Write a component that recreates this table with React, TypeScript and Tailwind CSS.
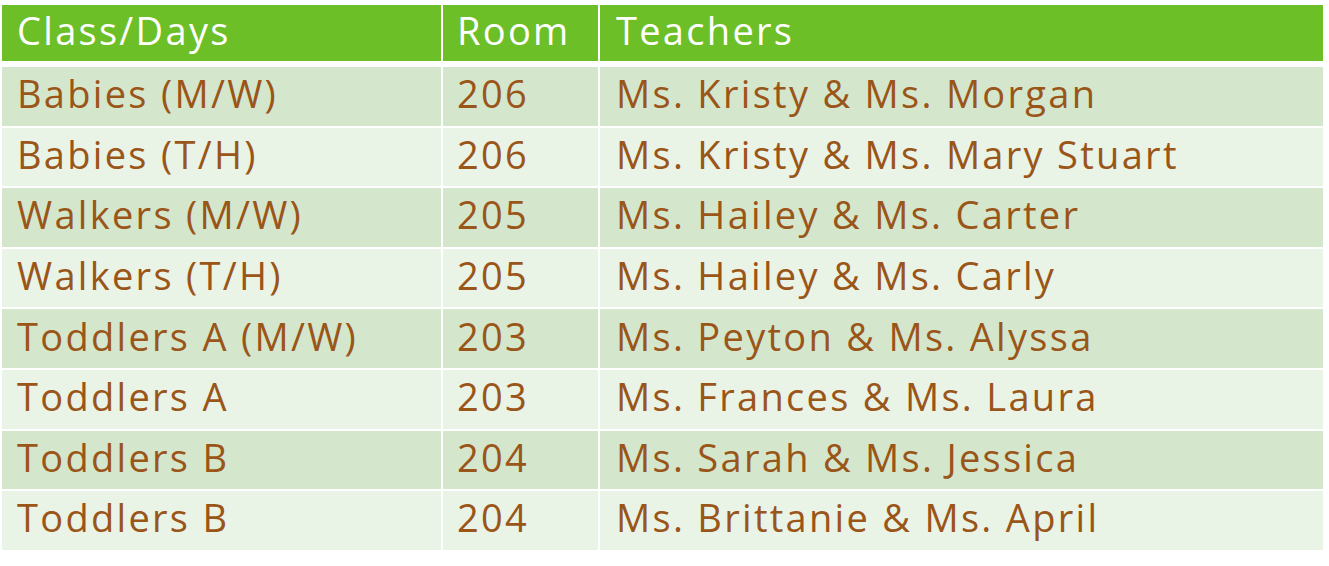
import React from 'react';

const rows = [
  ['Babies (M/W)', '206', 'Ms. Kristy & Ms. Morgan'],
  ['Babies (T/H)', '206', 'Ms. Kristy & Ms. Mary Stuart'],
  ['Walkers (M/W)', '205', 'Ms. Hailey & Ms. Carter'],
  ['Walkers (T/H)', '205', 'Ms. Hailey & Ms. Carly'],
  ['Toddlers A (M/W)', '203', 'Ms. Peyton & Ms. Alyssa'],
  ['Toddlers A', '203', 'Ms. Frances & Ms. Laura'],
  ['Toddlers B', '204', 'Ms. Sarah & Ms. Jessica'],
  ['Toddlers B', '204', 'Ms. Brittanie & Ms. April'],
];

export default function App() {
  return (
    <div className="w-[1329px] h-[566px] bg-white pt-[5px] pl-[2px] font-['Open_Sans',sans-serif] text-[38px] tracking-[2.3px] leading-none overflow-hidden">
      {/* Header */}
      <div className="grid grid-cols-[439px_155px_723px] gap-x-[2px] h-[56px] text-white">
        <div className="bg-[#6cbf27] flex items-center pl-[15px] pb-[6px]">Class/Days</div>
        <div className="bg-[#6cbf27] flex items-center pl-[14px] pb-[6px]">Room</div>
        <div className="bg-[#6cbf27] flex items-center pl-[16px] pb-[6px]">Teachers</div>
      </div>

      <div className="mt-[6px] flex flex-col gap-y-[2px]">
        {rows.map((r, i) => {
          const bg = i % 2 === 0 ? 'bg-[#d4e7cd]' : 'bg-[#e9f3e6]';
          return (
            <div key={i} className="grid grid-cols-[439px_155px_723px] gap-x-[2px] h-[58.6px] text-[#9a5518]">
              <div className={`${bg} flex items-center pl-[15px] pb-[6px] whitespace-nowrap`}>{r[0]}</div>
              <div className={`${bg} flex items-center pl-[14px] pb-[6px] whitespace-nowrap`}>{r[1]}</div>
              <div className={`${bg} flex items-center pl-[16px] pb-[6px] whitespace-nowrap`}>{r[2]}</div>
            </div>
          );
        })}
      </div>
    </div>
  );
}
